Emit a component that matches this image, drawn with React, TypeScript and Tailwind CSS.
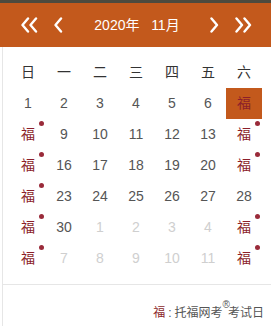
import React from 'react';

interface DayCell {
  label: string;
  muted?: boolean;
  exam?: boolean;
  selected?: boolean;
}

const weekdays = ['日', '一', '二', '三', '四', '五', '六'];

const rows: DayCell[][] = [
  [{ label: '1' }, { label: '2' }, { label: '3' }, { label: '4' }, { label: '5' }, { label: '6' }, { label: '7', exam: true, selected: true }],
  [{ label: '8', exam: true }, { label: '9' }, { label: '10' }, { label: '11' }, { label: '12' }, { label: '13' }, { label: '14', exam: true }],
  [{ label: '15', exam: true }, { label: '16' }, { label: '17' }, { label: '18' }, { label: '19' }, { label: '20' }, { label: '21', exam: true }],
  [{ label: '22', exam: true }, { label: '23' }, { label: '24' }, { label: '25' }, { label: '26' }, { label: '27' }, { label: '28' }],
  [{ label: '29', exam: true }, { label: '30' }, { label: '1', muted: true }, { label: '2', muted: true }, { label: '3', muted: true }, { label: '4', muted: true }, { label: '5', muted: true, exam: true }],
  [{ label: '6', muted: true, exam: true }, { label: '7', muted: true }, { label: '8', muted: true }, { label: '9', muted: true }, { label: '10', muted: true }, { label: '11', muted: true }, { label: '12', muted: true, exam: true }],
];

const Chevron: React.FC<{ dir: 'left' | 'right'; double?: boolean }> = ({ dir, double }) => {
  const w = double ? 18 : 10;
  const pts = (x: number) =>
    dir === 'left' ? `${x + 7},1.5 ${x + 1.5},8 ${x + 7},14.5` : `${x + 1.5},1.5 ${x + 7},8 ${x + 1.5},14.5`;
  return (
    <svg width={w} height={16} viewBox={`0 0 ${w} 16`} fill="none" stroke="#fff" strokeWidth={2.4} strokeLinecap="round" strokeLinejoin="round">
      <polyline points={pts(0)} />
      {double && <polyline points={pts(8)} />}
    </svg>
  );
};

export default function App() {
  return (
    <div className="w-[271px] h-[326px] bg-white overflow-hidden" style={{ fontFamily: '"Liberation Sans", "Noto Sans CJK SC", sans-serif' }}>
      <div className="h-[3px] bg-[#4d4a3e]" />
      <div className="h-[44px] bg-[#c3591c] flex items-center text-white">
        <div className="w-[21px]" />
        <Chevron dir="left" double />
        <div className="w-[15px]" />
        <Chevron dir="left" />
        <div className="flex-1 text-center text-[14px] pt-[1px]">2020年&nbsp;&nbsp;&nbsp;11月</div>
        <Chevron dir="right" />
        <div className="w-[15px]" />
        <Chevron dir="right" double />
        <div className="w-[18px]" />
      </div>

      <div className="ml-[2px] border-l border-[#e6e6e6] h-[279px] flex flex-col">
        <div className="pl-[7px] pt-[10px]">
          <div className="grid grid-cols-[repeat(7,36px)] h-[31px] items-center text-[14px] text-[#333]">
            {weekdays.map(d => (
              <div key={d} className="text-center">{d}</div>
            ))}
          </div>
          {rows.map((row, ri) => (
            <div key={ri} className="grid grid-cols-[repeat(7,36px)] h-[31px]">
              {row.map((c, ci) => (
                <div
                  key={ci}
                  className={`relative flex items-center justify-center text-[14px] ${c.selected ? 'bg-[#c3591c]' : ''} ${
                    c.exam ? 'text-[#8c1f2a]' : c.muted ? 'text-[#cfcfcf]' : 'text-[#555]'
                  }`}
                >
                  {c.exam ? '福' : c.label}
                  {c.exam && !c.selected && (
                    <span className="absolute top-[2px] right-[2px] w-[5px] h-[5px] rounded-full bg-[#9a2b3a]" />
                  )}
                </div>
              ))}
            </div>
          ))}
        </div>
        <div className="mt-[10px] border-t border-[#e6e6e6]" />
        <div className="flex justify-end items-start pr-[7px] pt-[19px] text-[12px] text-[#555]">
          <span className="text-[#8c1f2a]">福</span>
          <span className="mx-[3px]">:</span>
          <span>托福网考</span>
          <span className="text-[10px] leading-none relative top-[-4px] -mr-[2px]">®</span>
          <span>考试日</span>
        </div>
      </div>
    </div>
  );
}
